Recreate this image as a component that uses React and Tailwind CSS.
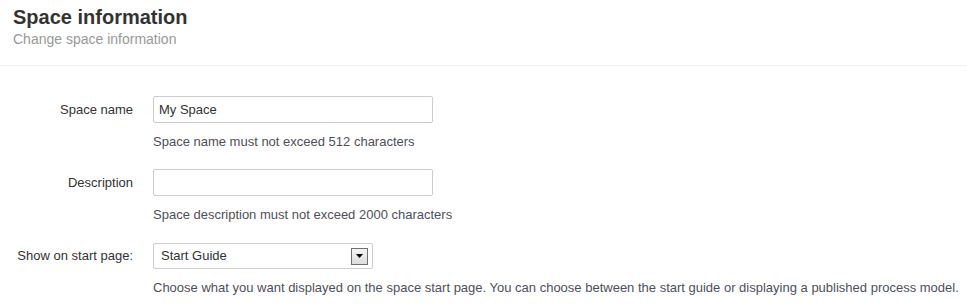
import React from "react";

const App = () => {
  return (
    <div className="w-[967px] h-[305px] bg-white font-['Liberation_Sans',Arial,sans-serif] overflow-hidden">
      {/* Header */}
      <div className="px-[13px] pt-[5px] pb-[16px] border-b border-[#eeeeee]">
        <h1 className="text-[20px] leading-[24px] font-bold text-[#333333]">Space information</h1>
        <p className="text-[14px] leading-[20px] text-[#999999]">Change space information</p>
      </div>

      {/* Form */}
      <div className="pt-[30px] text-[13px] text-[#333333]">
        <div className="flex">
          <label className="w-[133px] text-right h-[27px] leading-[27px]">Space name</label>
          <div className="ml-[20px]">
            <input
              type="text"
              defaultValue="My Space"
              className="w-[280px] h-[27px] border border-[#cccccc] rounded-[2px] px-[5px] text-[13px] text-[#333333] outline-none"
            />
            <p className="mt-[10px] leading-[18px] text-[#4f4f5a]">Space name must not exceed 512 characters</p>
          </div>
        </div>

        <div className="flex mt-[18px]">
          <label className="w-[133px] text-right h-[27px] leading-[27px]">Description</label>
          <div className="ml-[20px]">
            <input
              type="text"
              className="w-[280px] h-[27px] border border-[#cccccc] rounded-[2px] px-[5px] text-[13px] outline-none"
            />
            <p className="mt-[10px] leading-[18px] text-[#4f4f5a]">Space description must not exceed 2000 characters</p>
          </div>
        </div>

        <div className="flex mt-[19px]">
          <label className="w-[133px] text-right h-[26px] leading-[26px]">Show on start page:</label>
          <div className="ml-[20px]">
            <div className="w-[220px] h-[26px] border border-[#cccccc] rounded-[2px] flex items-center justify-between pl-[7px] pr-[4px]">
              <span className="text-[#333333]">Start Guide</span>
              <span className="w-[17px] h-[17px] border border-[#707070] bg-gradient-to-b from-[#f4f4f4] to-[#dcdcdc] flex items-center justify-center">
                <svg width="7" height="4" viewBox="0 0 7 4">
                  <path d="M0 0 L7 0 L3.5 4 Z" fill="#000" />
                </svg>
              </span>
            </div>
            <p className="mt-[10px] leading-[18px] text-[#4f4f5a] whitespace-nowrap">
              Choose what you want displayed on the space start page. You can choose between the start guide or displaying a published process model.
            </p>
          </div>
        </div>
      </div>
    </div>
  );
};

export default App;
